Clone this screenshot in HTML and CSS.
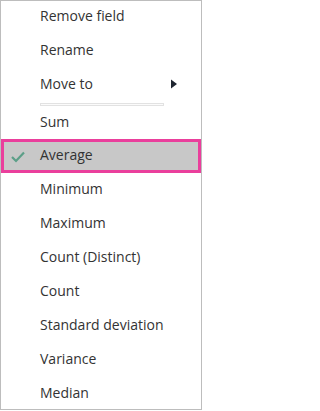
FILE: index.html
```html
<!DOCTYPE html>
<html lang="en">
<head>
<meta charset="utf-8">
<title>Field menu</title>
<link rel="stylesheet" href="styles.css">
</head>
<body>
<ul class="menu">
  <li class="item top">Remove field</li>
  <li class="item top">Rename</li>
  <li class="item top">Move to
    <svg class="sub-arrow" width="6" height="10" viewBox="0 0 6 10"><path d="M0 0.5 L6 5 L0 9.5 Z" fill="#1e2530"/></svg>
  </li>
  <li class="sep" role="separator"></li>
  <li class="item first-agg">Sum</li>
  <li class="item selected">
    <svg class="check" width="14" height="12" viewBox="0 0 14 12"><path d="M1 6 L5 10 L13 1.5" fill="none" stroke="#5c9f88" stroke-width="2.2"/></svg>Average
  </li>
  <li class="item">Minimum</li>
  <li class="item">Maximum</li>
  <li class="item">Count (Distinct)</li>
  <li class="item">Count</li>
  <li class="item">Standard deviation</li>
  <li class="item">Variance</li>
  <li class="item">Median</li>
</ul>
</body>
</html>
```
FILE: styles.css
```css
html, body {
  margin: 0;
  padding: 0;
  background: #ffffff;
}

.menu {
  list-style: none;
  margin: 0;
  padding: 0;
  width: 202px;
  height: 410px;
  box-sizing: border-box;
  border: 1px solid #bdbdbd;
  overflow: hidden;
  font-family: "Open Sans", "Noto Sans", sans-serif;
  font-size: 14px;
  color: #333333;
  background: #ffffff;
}

.item {
  display: flex;
  align-items: center;
  box-sizing: border-box;
  height: 34px;
  line-height: 32px;
  padding: 0 0 2px 39px;
  white-space: nowrap;
}

.item.top {
  line-height: 30px;
  padding-bottom: 4px;
}

.item.first-agg {
  height: 33px;
  line-height: 31px;
}

.sub-arrow {
  margin-left: auto;
  margin-right: 24px;
}

.sep {
  box-sizing: border-box;
  height: 3px;
  width: 124px;
  margin-left: 39px;
  border: 1px solid #e2e2e2;
  background: #fbfbfb;
}

.selected {
  background: #c8c8c8;
  box-shadow: inset 0 0 0 3px #ea3f9c;
}

.check {
  margin-left: -29px;
  margin-right: 15px;
  margin-top: 3px;
}
```
